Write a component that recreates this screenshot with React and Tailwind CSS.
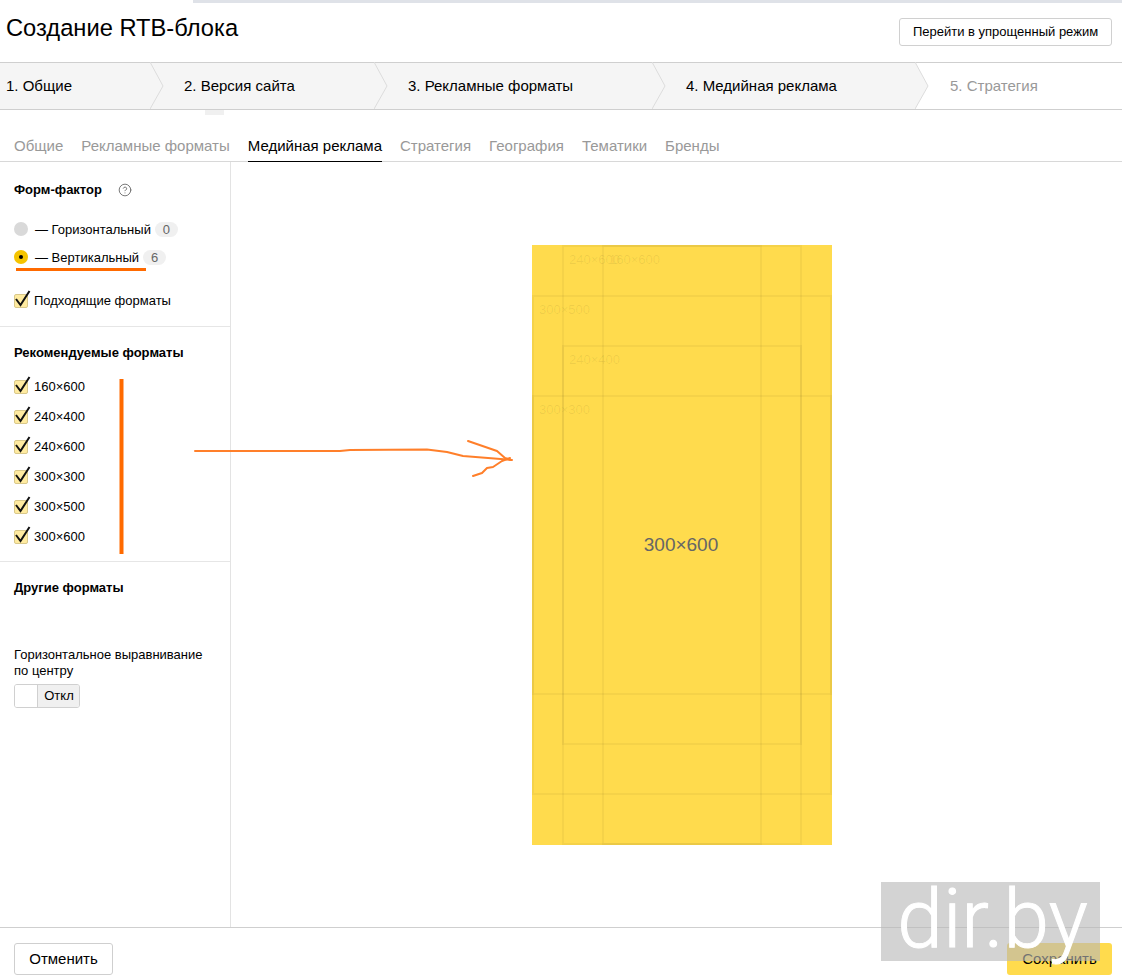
import { CircleHelp } from "lucide-react"

const steps = [
    { label: "1. Общие", width: "w-[150px]", text: "pl-[6px]" },
    { label: "2. Версия сайта", width: "w-[224px]", text: "pl-[34px]" },
    { label: "3. Рекламные форматы", width: "w-[278px]", text: "pl-[34px]" },
    { label: "4. Медийная реклама", width: "w-[263px]", text: "pl-[34px]" },
]

const tabs = ["Общие", "Рекламные форматы", "Медийная реклама", "Стратегия", "География", "Тематики", "Бренды"]

const sizes = ["160×600", "240×400", "240×600", "300×300", "300×500", "300×600"]

const Checkbox = () => (
    <span className="relative block w-[14px] h-[14px] shrink-0 rounded-[2px] bg-[#ffeba0] border border-[#d9c88a]">
        <svg className="absolute -left-px -top-[5px] overflow-visible" width="17" height="19" viewBox="0 0 17 19" fill="none">
            <path d="M2 9 L6.5 15 L15.5 1" stroke="#111" strokeWidth="2" />
        </svg>
    </span>
)

const Chevron = () => (
    <svg className="absolute left-full -top-px z-10" width="14" height="48" viewBox="0 0 14 48" fill="none">
        <polygon points="0,0 13,24 0,47" fill="#f5f5f5" />
        <polyline points="0,0 13,24 0,47" stroke="#dcdcdc" strokeWidth="1" />
    </svg>
)

const App = () => {
    return (
        <div className="relative w-[1122px] h-[980px] overflow-hidden bg-white text-black font-['Liberation_Sans',Arial,sans-serif]">
            <div className="h-[3px] ml-[193px] bg-[#dfe2e8]"></div>

            <header className="h-[59px] flex justify-between pl-[6px] pr-[10px]">
                <h1 className="text-[23.7px] leading-[28px] pt-[11px]">Создание RTB-блока</h1>
                <button className="mt-[15px] h-[28px] w-[213px] border border-[#d0d0d0] rounded-[3px] text-[13px] text-center">
                    Перейти в упрощенный режим
                </button>
            </header>

            <nav className="relative h-[48px] flex border-y border-[#cfcfcf] text-[15px] leading-[46px]">
                {steps.map(s => (
                    <div key={s.label} className={`relative bg-[#f5f5f5] ${s.width} ${s.text}`}>
                        {s.label}
                        <Chevron />
                    </div>
                ))}
                <div className="pl-[35px] text-[#999]">5. Стратегия</div>
                <div className="absolute left-[205px] top-[47px] w-[19px] h-[5px] bg-[#f0f0f0]"></div>
            </nav>

            <div className="h-[52px] flex items-end gap-[18px] pl-[14px] border-b border-[#d8d8d8] text-[15px] text-[#999]">
                {tabs.map(t => (
                    <div
                        key={t}
                        className={t === "Медийная реклама"
                            ? "h-[31px] leading-[30px] text-black border-b border-black -mb-px"
                            : "h-[31px] leading-[32px]"}
                    >
                        {t}
                    </div>
                ))}
            </div>

            <div className="flex h-[765px]">
                <aside className="w-[231px] shrink-0 border-r border-[#e3e3e3] text-[13px] leading-[16px]">
                    <div className="h-[165px] px-[14px] pt-[20px] border-b border-[#e6e6e6]">
                        <div className="flex items-center">
                            <b>Форм-фактор</b>
                            <CircleHelp className="ml-[16px] text-[#666]" size={14} strokeWidth={1.5} />
                        </div>
                        <div className="mt-[23px] flex items-center h-[16px]">
                            <span className="w-[14px] h-[14px] rounded-full bg-[#d9d9d9]"></span>
                            <span className="ml-[7px] pt-px">— Горизонтальный</span>
                            <span className="ml-[4px] w-[23px] h-[15px] rounded-full bg-[#f0f0f0] text-center text-[#666]">0</span>
                        </div>
                        <div className="mt-[12px] flex items-center h-[16px]">
                            <span className="flex items-center justify-center w-[14px] h-[14px] rounded-full bg-[#f5c400]">
                                <span className="w-[4px] h-[4px] rounded-full bg-black"></span>
                            </span>
                            <span className="ml-[7px] pt-px">— Вертикальный</span>
                            <span className="ml-[4px] w-[23px] h-[15px] rounded-full bg-[#f0f0f0] text-center text-[#666]">6</span>
                        </div>
                        <div className="mt-[27px] flex items-center gap-[6px]">
                            <Checkbox />
                            <span className="pt-px">Подходящие форматы</span>
                        </div>
                    </div>

                    <div className="h-[235px] px-[14px] pt-[18px] border-b border-[#e6e6e6]">
                        <b className="block">Рекомендуемые форматы</b>
                        <div className="mt-[18px] flex flex-col gap-[14px]">
                            {sizes.map(s => (
                                <div key={s} className="flex items-center gap-[6px]">
                                    <Checkbox />
                                    {s}
                                </div>
                            ))}
                        </div>
                    </div>

                    <div className="px-[14px] pt-[18px]">
                        <b className="block">Другие форматы</b>
                        <div className="mt-[51px]">
                            Горизонтальное выравнивание
                            <br />
                            по центру
                        </div>
                        <div className="mt-[5px] flex w-[66px] h-[24px] border border-[#d0d0d0] rounded-[3px] overflow-hidden">
                            <span className="w-[23px] bg-white border-r border-[#d0d0d0]"></span>
                            <span className="flex-1 bg-[#f0f0f0] leading-[22px] text-center pl-px">Откл</span>
                        </div>
                    </div>
                </aside>

                <main className="flex-1 pl-[301px] pt-[83px]">
                    <div className="relative w-[300px] h-[600px] bg-[#ffdb4d] text-[13px] leading-[16px] text-black/[0.07]">
                        <div className="absolute left-[30px] top-0 w-[240px] h-[600px] border-2 border-black/[0.04] pl-[5px] pt-[5px]">240×600</div>
                        <div className="absolute left-[70px] top-0 w-[160px] h-[600px] border-2 border-black/[0.04] pl-[5px] pt-[5px]">160×600</div>
                        <div className="absolute left-0 top-[50px] w-[300px] h-[500px] border-2 border-black/[0.04] pl-[5px] pt-[5px]">300×500</div>
                        <div className="absolute left-[30px] top-[100px] w-[240px] h-[400px] border-2 border-black/[0.04] pl-[5px] pt-[5px]">240×400</div>
                        <div className="absolute left-0 top-[150px] w-[300px] h-[300px] border-2 border-black/[0.04] pl-[5px] pt-[5px]">300×300</div>
                        <div className="absolute inset-0 flex items-center justify-center text-[19px] text-[#666]">
                            <span className="ml-[-2px]">300×600</span>
                        </div>
                    </div>
                </main>
            </div>

            <footer className="h-[53px] flex justify-between pl-[14px] pr-[10px] pt-[15px] border-t border-[#cfcfcf] text-[15px]">
                <button className="w-[99px] h-[32px] border border-[#cfcfcf] rounded-[3px]">Отменить</button>
                <button className="w-[105px] h-[32px] bg-[#ffdb4d] rounded-[3px]">Сохранить</button>
            </footer>

            {/* пометки поверх скриншота */}
            <svg className="absolute left-0 top-0 pointer-events-none" width="1122" height="980" viewBox="0 0 1122 980" fill="none">
                <path d="M16 269.5 H146" stroke="#ff6a00" strokeWidth="3" />
                <path d="M121.5 379 V554" stroke="#ff6a00" strokeWidth="4" />
                <g stroke="#ff7f2a" strokeWidth="2" strokeLinejoin="round" strokeLinecap="round">
                    <path d="M195 451 L340 451 L350 450 L427 449.5 L447 452 L463 456 L512 460" />
                    <path d="M468 441 L497 451 L505 458 L511 460" />
                    <path d="M473 476 L482 473 L487 468 L493 467 L502 461 L510 458" />
                </g>
            </svg>

            <div className="absolute left-[881px] top-[882px] w-[219px] h-[79px] pl-[4px] bg-[rgba(184,184,184,0.62)] text-white text-[82px] leading-[74px] text-center whitespace-nowrap font-['Roboto','Liberation_Sans',sans-serif] font-light [-webkit-text-stroke:1px_white]">
                dir.by
            </div>
        </div>
    )
}

export default App
